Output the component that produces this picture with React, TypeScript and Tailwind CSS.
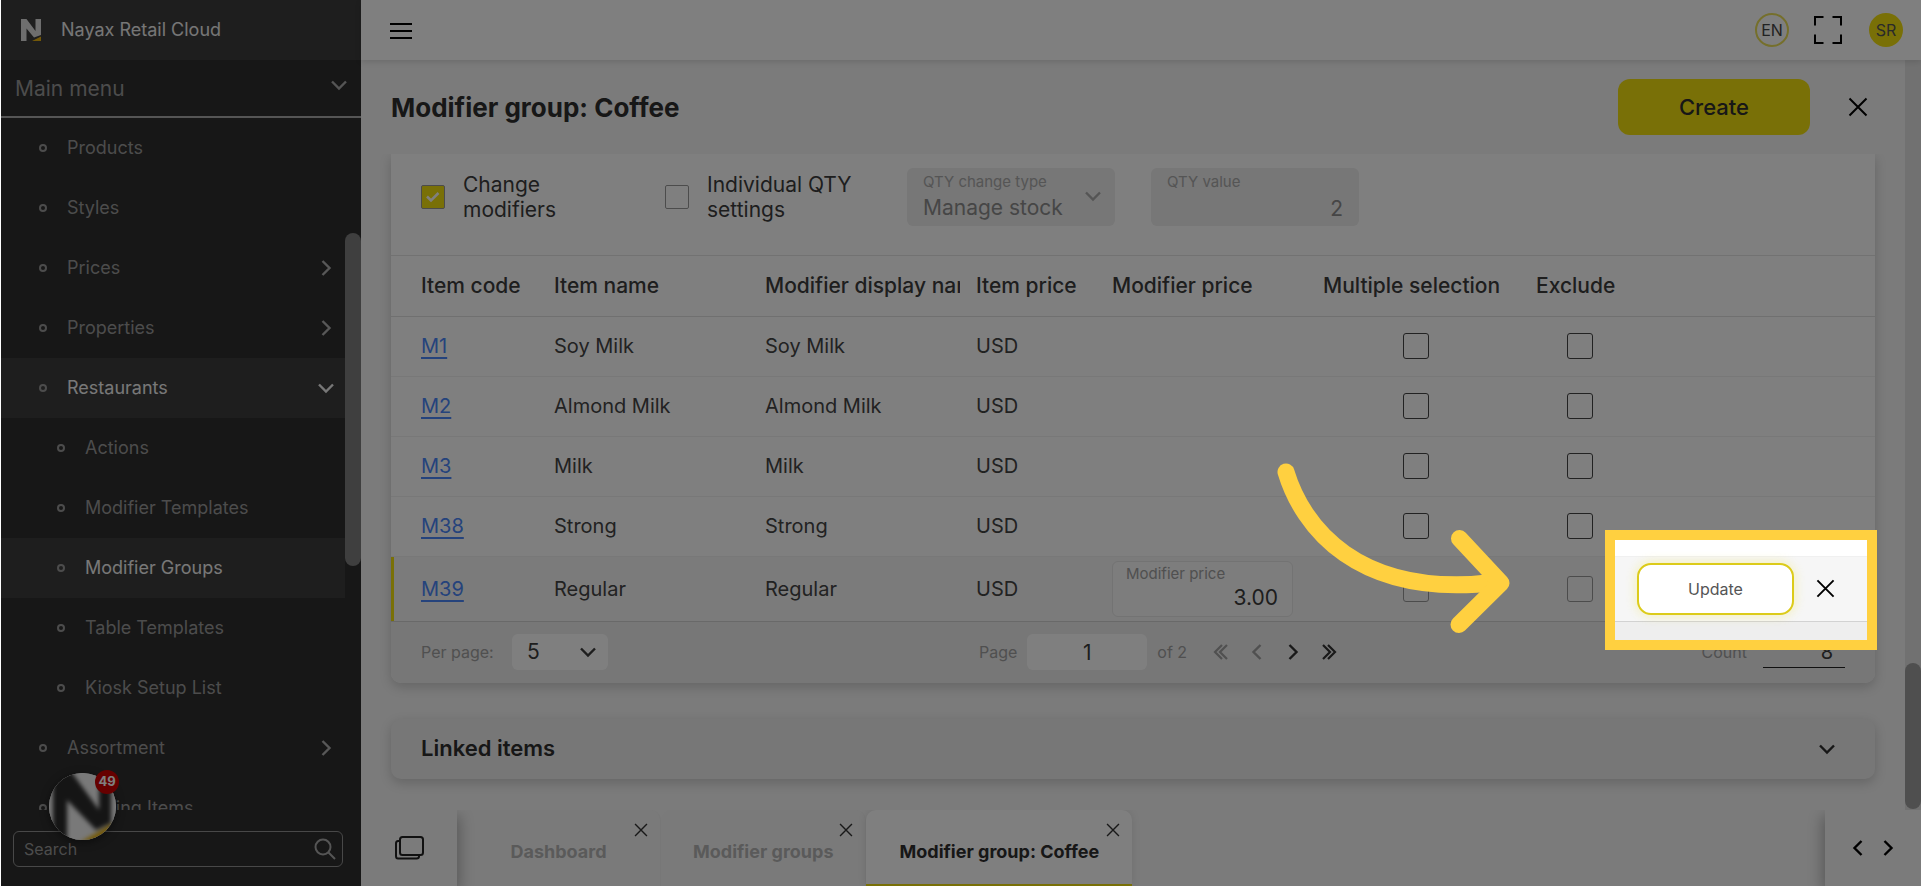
import type { ReactNode } from "react";

type Direction = "down" | "left" | "right";

const chevronPaths: Record<Direction, string> = {
  down: "M3 6.5 L10 13.5 L17 6.5",
  left: "M13.5 3 L6.5 10 L13.5 17",
  right: "M6.5 3 L13.5 10 L6.5 17",
};

function Chevron({ dir, className = "" }: { dir: Direction; className?: string }) {
  return (
    <svg viewBox="0 0 20 20" aria-hidden="true" strokeWidth="2.4" className={`size-5 shrink-0 fill-none stroke-current ${className}`}>
      <path d={chevronPaths[dir]} />
    </svg>
  );
}

function DoubleChevron({ flip = false }: { flip?: boolean }) {
  return (
    <svg viewBox="0 0 20 20" aria-hidden="true" strokeWidth="2.2" className="size-5 fill-none stroke-current">
      <path d={flip ? "M11 3 L4 10 L11 17 M16 3 L9 10 L16 17" : "M4 3 L11 10 L4 17 M9 3 L16 10 L9 17"} />
    </svg>
  );
}

function Cross({ className = "size-5" }: { className?: string }) {
  return (
    <svg viewBox="0 0 20 20" aria-hidden="true" className={`fill-none stroke-current stroke-2 ${className}`}>
      <path d="M1.5 1.5 L18.5 18.5 M18.5 1.5 L1.5 18.5" />
    </svg>
  );
}

type MenuItem = { label: string; nested?: boolean; active?: boolean; dir?: Direction };

const menu: MenuItem[] = [
  { label: "Products" },
  { label: "Styles" },
  { label: "Prices", dir: "right" },
  { label: "Properties", dir: "right" },
  { label: "Restaurants", dir: "down", active: true },
  { label: "Actions", nested: true },
  { label: "Modifier Templates", nested: true },
  { label: "Modifier Groups", nested: true, active: true },
  { label: "Table Templates", nested: true },
  { label: "Kiosk Setup List", nested: true },
  { label: "Assortment", dir: "right" },
  { label: "Ordering Items" },
];

function MenuRow({ label, nested, active, dir }: MenuItem) {
  return (
    <li>
      <a
        href="#"
        className={`flex h-[60px] items-center pr-[9px] text-lg ${nested ? "pl-[56px]" : "pl-[38px]"} ${
          active ? "bg-[#3c3c3c] text-[#f0f0f0]" : "text-[#999]"
        }`}
      >
        <span className="size-2 shrink-0 rounded-full border-2 border-[#999]" />
        <span className="flex-1 pl-5">{label}</span>
        {dir && <Chevron dir={dir} className={active ? "" : "text-[#b0b0b0]"} />}
      </a>
    </li>
  );
}

function Sidebar() {
  return (
    <aside className="flex w-[360px] shrink-0 flex-col bg-[#2e2e2e]">
      <div className="flex h-[60px] items-center bg-[#3c3c3c] pl-5">
        <svg viewBox="0 0 20 22" aria-hidden="true" className="h-[22px] w-5">
          <path d="M0 22 V0 H5.5 L14.5 12 V0 H20 V16 L13 18.5 L5.5 9.5 V22 Z" fill="#dcdcdc" />
          <path d="M11 22 L20 17.5 V22 Z" fill="#e6b010" />
        </svg>
        <span className="pl-5 text-lg text-[#ececec]">Nayax Retail Cloud</span>
      </div>
      <button className="flex h-[58px] items-center justify-between border-b-2 border-[#aaa] pt-0.5 pr-3 pl-[14px] text-[21px] text-[#999]">
        Main menu
        <Chevron dir="down" className="-mt-2 text-[#aaa]" />
      </button>
      <div className="flex min-h-0 flex-1">
        <ul className="flex-1 overflow-hidden">
          {menu.map((item) => (
            <MenuRow key={item.label} {...item} />
          ))}
        </ul>
        <div className="w-4 pt-[115px]">
          <div className="h-[333px] rounded-full bg-[#7e7e7e]" />
        </div>
      </div>
      <div className="h-[76px] pt-[21px] pr-[18px] pl-3">
        <label className="flex h-9 items-center rounded-md border border-[#909090] pr-1.5 pl-2.5">
          <input aria-label="Search" placeholder="Search" className="min-w-0 flex-1 bg-transparent text-base outline-none placeholder:text-[#999]" />
          <svg viewBox="0 0 22 22" aria-hidden="true" className="size-[22px] fill-none stroke-[#aaa] stroke-2">
            <circle cx="9" cy="9" r="7.5" />
            <path d="M14.5 14.5 L21 21" />
          </svg>
        </label>
      </div>
    </aside>
  );
}

function TopBar() {
  return (
    <header className="relative z-10 flex h-[60px] shrink-0 items-center bg-white pr-[18px] pl-[29px] shadow-[0_2px_6px_rgba(0,0,0,0.12)]">
      <button aria-label="Toggle menu" className="flex w-[22px] flex-col gap-[5px] pt-0.5">
        <span className="h-0.5 bg-black" />
        <span className="h-0.5 bg-black" />
        <span className="h-0.5 bg-black" />
      </button>
      <div className="ml-auto flex items-center gap-6">
        <button className="size-[34px] rounded-full border-2 border-[#eadf58] text-base leading-none text-[#444]">EN</button>
        <button aria-label="Full screen" className="pr-0.5">
          <svg viewBox="0 0 30 30" className="size-[30px] fill-none stroke-black stroke-2">
            <path d="M2 10.5 V2 H10.5 M19.5 2 H28 V10.5 M28 19.5 V28 H19.5 M10.5 28 H2 V19.5" />
          </svg>
        </button>
        <button className="size-[34px] rounded-full bg-[#f3e00f] text-base leading-none text-[#555]">SR</button>
      </div>
    </header>
  );
}

function Settings() {
  return (
    <div className="flex items-center border-b border-[#e4e4e4] pt-[14px] pb-[29px] pl-[30px] text-[21px] leading-[25px] text-[#3c3c3c]">
      <label className="flex w-[244px] items-center gap-[18px]">
        <span className="relative size-6">
          <input type="checkbox" defaultChecked className="peer block size-6 appearance-none rounded-xs border border-[#999] checked:bg-[#f3e00f]" />
          <svg viewBox="0 0 24 24" aria-hidden="true" strokeWidth="2.5" className="pointer-events-none absolute inset-0 fill-none stroke-white">
            <path d="M6 11.5 L10 15.5 L17.5 8" />
          </svg>
        </span>
        <span className="w-[120px]">Change modifiers</span>
      </label>
      <label className="flex w-[242px] items-center gap-[18px]">
        <input type="checkbox" className="size-6 shrink-0 appearance-none rounded-xs border border-[#999]" />
        <span className="w-[150px]">Individual QTY settings</span>
      </label>
      <div className="relative mr-9 w-[208px]">
        <label htmlFor="qty-type" className="absolute top-1 left-4 text-[15px] leading-5 text-[#aaa]">
          QTY change type
        </label>
        <select id="qty-type" disabled className="block h-[58px] w-full appearance-none rounded-md bg-[#eee] pt-[22px] pl-4 text-[21px] leading-7 text-[#8c8c8c] opacity-100">
          <option>Manage stock</option>
        </select>
        <Chevron dir="down" className="pointer-events-none absolute top-[18px] right-3 text-[#aaa]" />
      </div>
      <div className="relative w-[208px]">
        <label htmlFor="qty-value" className="absolute top-1 left-4 text-[15px] leading-5 text-[#aaa]">
          QTY value
        </label>
        <input id="qty-value" disabled defaultValue="2" className="block h-[58px] w-full rounded-md bg-[#eee] pt-[22px] pr-4 text-right text-[21px] leading-7 text-[#8c8c8c]" />
      </div>
    </div>
  );
}

const items = [
  { code: "M1", name: "Soy Milk" },
  { code: "M2", name: "Almond Milk" },
  { code: "M3", name: "Milk" },
  { code: "M38", name: "Strong" },
  { code: "M39", name: "Regular", editing: true },
];

function RowCheck({ label, faint }: { label: string; faint?: boolean }) {
  return (
    <input
      type="checkbox"
      aria-label={label}
      className={`mx-auto block size-[26px] appearance-none rounded-[3px] border ${faint ? "border-[#999]" : "border-[#444]"}`}
    />
  );
}

function ItemsTable() {
  return (
    <table className="w-full table-fixed text-left text-xl text-[#444]">
      <colgroup>
        <col className="w-[163px]" />
        <col className="w-[211px]" />
        <col className="w-[211px]" />
        <col className="w-[136px]" />
        <col className="w-[211px]" />
        <col className="w-[213px]" />
        <col className="w-[101px]" />
        <col />
      </colgroup>
      <thead>
        <tr className="h-[60px] border-b border-[#e0e0e0] text-[21px] whitespace-nowrap text-[#3c3c3c] [&>th]:p-0 [&>th]:font-medium">
          <th><div className="pl-[30px]">Item code</div></th>
          <th>Item name</th>
          <th><div className="mr-4 overflow-hidden">Modifier display name</div></th>
          <th>Item price</th>
          <th>Modifier price</th>
          <th>Multiple selection</th>
          <th>Exclude</th>
          <th aria-label="Actions" />
        </tr>
      </thead>
      <tbody>
        {items.map(({ code, name, editing }) => (
          <tr key={code} className={`border-b [&>td]:p-0 ${editing ? "h-[65px] border-[#d2d2d2] bg-[#f6f6f6]" : "h-[60px] border-[#f0f0f0]"}`}>
            <td>
              <div className={`flex items-center border-l-[3px] pl-[27px] ${editing ? "h-16 border-[#f3e00f]" : "h-[59px] border-transparent"}`}>
                <a href="#" className="text-[#4a86f8] underline decoration-2 underline-offset-4">{code}</a>
              </div>
            </td>
            <td>{name}</td>
            <td>{name}</td>
            <td>USD</td>
            <td>
              {editing && (
                <div className="relative w-[181px]">
                  <label htmlFor="mod-price" className="absolute top-1 left-[14px] text-[15px] leading-[18px] text-[#a0a0a0]">Modifier price</label>
                  <input id="mod-price" defaultValue="3.00" className="block h-14 w-full rounded-md border border-[#e6e6e6] bg-[#fafafa] pt-[18px] pr-[14px] text-right text-[21px] leading-7 text-[#3c3c3c]" />
                </div>
              )}
            </td>
            <td><div className="pr-7"><RowCheck label={`Multiple selection ${code}`} faint={editing} /></div></td>
            <td><div className="pr-[14px]"><RowCheck label={`Exclude ${code}`} faint={editing} /></div></td>
            <td>
              {editing && (
                <div className="flex items-center gap-[22px]">
                  <button className="h-[52px] w-[157px] rounded-[14px] border-2 border-[#dccb1a] bg-white text-base text-[#555] shadow-[0_0_12px_rgba(243,224,15,0.3)]">Update</button>
                  <button aria-label="Cancel" className="text-black"><Cross className="size-[19px]" /></button>
                </div>
              )}
            </td>
          </tr>
        ))}
      </tbody>
    </table>
  );
}

function Pager() {
  return (
    <div className="grid h-[61px] grid-cols-[1fr_auto_1fr] items-center rounded-b-[10px] bg-[#eee] px-[30px] text-base text-[#a0a0a0]">
      <div className="flex items-center">
        <label htmlFor="per-page" className="w-[91px]">Per page:</label>
        <div className="relative">
          <select id="per-page" className="block h-9 w-24 appearance-none rounded-md bg-white pl-[15px] text-[21px] leading-9 text-[#3c3c3c]">
            <option>5</option>
          </select>
          <Chevron dir="down" className="pointer-events-none absolute top-2 right-2.5 text-[#3c3c3c]" />
        </div>
      </div>
      <div className="flex items-center pl-[52px]">
        <label htmlFor="page" className="pr-2.5">Page</label>
        <input id="page" defaultValue="1" className="h-9 w-[120px] rounded-md bg-white text-center text-[21px] text-[#3c3c3c]" />
        <span className="pl-2.5">of 2</span>
        <div className="flex gap-4 pl-6">
          <button aria-label="First page"><DoubleChevron flip /></button>
          <button aria-label="Previous page"><Chevron dir="left" /></button>
          <button aria-label="Next page" className="text-[#333]"><Chevron dir="right" /></button>
          <button aria-label="Last page" className="text-[#333]"><DoubleChevron /></button>
        </div>
      </div>
      <div className="flex items-center justify-end gap-4">
        <label htmlFor="count">Count</label>
        <input id="count" readOnly defaultValue="8" className="h-8 w-[82px] border-b border-[#222] pr-3 text-right text-xl text-[#3c3c3c]" />
      </div>
    </div>
  );
}

function Tab({ active, children }: { active?: boolean; children: ReactNode }) {
  return (
    <div
      className={`relative flex items-center justify-center rounded-t-[10px] pt-2.5 ${
        active
          ? "border-b-2 border-[#f3e00f] bg-white px-[33px] text-[#2e2e2e] shadow-[0_0_8px_rgba(0,0,0,0.1)]"
          : "min-w-[204px] border-r border-[#efefef] bg-[#f4f4f4] px-8 pb-0.5 text-[#b4b4b4]"
      }`}
    >
      <button className="text-lg font-bold">{children}</button>
      <button aria-label="Close tab" className="absolute top-[13px] right-3 text-[#333]"><Cross className="size-[14px]" /></button>
    </div>
  );
}

function TabBar() {
  return (
    <footer className="flex h-[76px] shrink-0 overflow-hidden bg-[#f6f6f6]">
      <button aria-label="Windows" className="relative z-10 flex w-24 items-center bg-[#f6f6f6] pl-[33px] shadow-[2px_6px_14px_rgba(0,0,0,0.3)]">
        <svg viewBox="0 0 30 24" className="h-6 w-[30px] fill-none stroke-[#222] stroke-2">
          <rect x="6" y="1" width="23" height="18" rx="2.5" />
          <path d="M6 5 H4 Q2 5 2 7.5 V20 Q2 22.500 4 22.500 H22.500 Q25 22.500 25 20.500 V19" />
        </svg>
      </button>
      <div className="flex min-w-0 flex-1">
        <Tab>Dashboard</Tab>
        <Tab>Modifier groups</Tab>
        <Tab active>Modifier group: Coffee</Tab>
      </div>
      <div className="relative z-10 flex w-24 items-center justify-center gap-2.5 bg-[#f6f6f6] shadow-[-2px_6px_14px_rgba(0,0,0,0.3)]">
        <button aria-label="Previous tabs"><Chevron dir="left" /></button>
        <button aria-label="Next tabs"><Chevron dir="right" /></button>
      </div>
    </footer>
  );
}

function ChatBubble() {
  return (
    <div className="absolute bottom-[46px] left-12 size-[67px]">
      <button aria-label="Open notifications" className="size-full overflow-hidden rounded-full bg-white shadow-[0_2px_8px_rgba(0,0,0,0.5)]">
        <svg viewBox="0 0 67 67" className="size-full">
          <rect width="67" height="67" fill="#f2f2f2" />
          <g className="blur-[2px]">
            <path d="M4 -3 H21 L50 37 V-3 H62 V50 L47 57 L18 27 V70 H4 Z" fill="#2b2b2b" />
            <path d="M30 70 L64 50 V70 Z" fill="#e6b010" />
          </g>
        </svg>
      </button>
      <span className="absolute -top-[3px] -right-[3px] flex size-6 items-center justify-center rounded-full bg-[#cc0000] text-[13px] font-bold text-white">49</span>
    </div>
  );
}

function Spotlight() {
  return (
    <>
      <div className="pointer-events-none absolute top-[530px] right-11 z-20 h-[120px] w-[272px] border-10 border-[#ffd040] shadow-[0_0_0_3000px_rgba(0,0,0,0.5)]" />
      <svg viewBox="1276 463 234 172" aria-hidden="true" className="pointer-events-none absolute top-[463px] right-[411px] z-30 h-[172px] w-[234px] fill-none stroke-[#ffd040] stroke-[17]">
        <path strokeLinecap="round" d="M1286 472 C1302 525 1356 600 1498 582" />
        <path strokeLinecap="round" strokeLinejoin="round" d="M1459.5 538.5 L1501 583 L1459 624.5" />
      </svg>
    </>
  );
}

export default function App() {
  return (
    <div className="h-screen bg-white px-px font-['Inter','Liberation_Sans',sans-serif]">
      <div className="relative flex h-full overflow-hidden bg-[#f6f6f6]">
        <Sidebar />
        <div className="flex min-w-0 flex-1 flex-col">
          <TopBar />
          <div className="flex min-h-0 flex-1">
            <main className="flex min-w-0 flex-1 flex-col">
              <div className="flex h-[94px] shrink-0 items-center pr-[37px] pl-[30px]">
                <h1 className="flex-1 text-[26px] font-bold text-[#2e2e2e]">Modifier group: Coffee</h1>
                <button className="mr-[38px] h-14 w-48 rounded-xl bg-[#f3e00f] text-[22px] font-medium text-[#2e2e2e]">Create</button>
                <button aria-label="Close" className="text-black"><Cross /></button>
              </div>
              <div className="min-h-0 flex-1 overflow-hidden px-[30px]">
                <section className="rounded-b-[10px] bg-white shadow-[0_4px_12px_rgba(0,0,0,0.18)]">
                  <Settings />
                  <ItemsTable />
                  <Pager />
                </section>
                <button className="mt-9 flex h-[60px] w-full items-center justify-between rounded-[10px] bg-[#eee] pr-[38px] pl-[30px] text-[22px] font-semibold text-[#2e2e2e] shadow-[0_4px_12px_rgba(0,0,0,0.18)]">
                  Linked items
                  <Chevron dir="down" />
                </button>
              </div>
            </main>
            <div className="flex w-4 flex-col justify-end bg-[#e3e3e3] pb-px">
              <div className="h-[146px] rounded-full bg-[#9e9e9e]" />
            </div>
          </div>
          <TabBar />
        </div>
        <ChatBubble />
        <Spotlight />
      </div>
    </div>
  );
}
